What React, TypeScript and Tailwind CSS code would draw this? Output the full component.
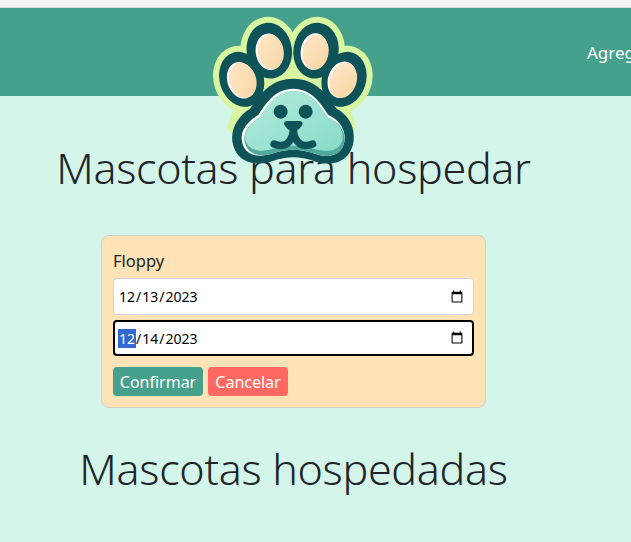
import React from "react";

function PawLogo() {
  const pad =
    "M310 236 C378 236 412 285 440 326 C478 346 497 385 490 428 C478 494 412 500 370 482 C330 468 290 468 250 482 C200 500 138 492 127 424 C122 378 150 345 180 326 C210 282 243 236 310 236 Z";
  const toes = [
    { cx: 238, cy: 152, rx: 68, ry: 84, r: -8 },
    { cx: 378, cy: 152, rx: 68, ry: 84, r: 8 },
    { cx: 155, cy: 238, rx: 66, ry: 84, r: -18 },
    { cx: 462, cy: 238, rx: 66, ry: 84, r: 18 },
  ];
  const inner = [
    { cx: 241, cy: 155, rx: 41, ry: 55, r: -8 },
    { cx: 376, cy: 155, rx: 41, ry: 55, r: 8 },
    { cx: 157, cy: 240, rx: 42, ry: 56, r: -18 },
    { cx: 459, cy: 240, rx: 42, ry: 56, r: 18 },
  ];
  return (
    <svg
      className="absolute left-[210px] top-[15px] h-[155px] w-[168px]"
      viewBox="60 45 504 465"
      aria-label="logo"
    >
      <defs>
        <linearGradient id="padFill" x1="0" y1="0" x2="1" y2="1">
          <stop offset="0" stopColor="#b4ebdd" />
          <stop offset="1" stopColor="#88dbc9" />
        </linearGradient>
        <linearGradient id="beanFill" x1="0" y1="0" x2="1" y2="1">
          <stop offset="0" stopColor="#fde8c8" />
          <stop offset="1" stopColor="#f9d6a4" />
        </linearGradient>
      </defs>
      {/* lime halo */}
      <g fill="#d8f5a2" stroke="#d8f5a2" strokeWidth="36">
        {toes.map((t, i) => (
          <ellipse key={i} cx={t.cx} cy={t.cy} rx={t.rx} ry={t.ry} transform={`rotate(${t.r} ${t.cx} ${t.cy})`} />
        ))}
        <path d="M200 200 L420 200 L480 380 L440 420 L170 420 L130 380 Z" />
      </g>
      {/* dark outline */}
      <g fill="#0e5358">
        {toes.map((t, i) => (
          <ellipse key={i} cx={t.cx} cy={t.cy} rx={t.rx} ry={t.ry} transform={`rotate(${t.r} ${t.cx} ${t.cy})`} />
        ))}
      </g>
      <path d={pad} fill="#0e5358" />
      {/* toe beans */}
      {inner.map((t, i) => (
        <g key={i} transform={`rotate(${t.r} ${t.cx} ${t.cy})`}>
          <ellipse cx={t.cx - 3} cy={t.cy} rx={t.rx} ry={t.ry} fill="#ffffff" />
          <ellipse cx={t.cx + 1} cy={t.cy + 1} rx={t.rx - 2} ry={t.ry - 2} fill="url(#beanFill)" />
        </g>
      ))}
      {/* main pad */}
      <path
        d="M310 266 C365 266 392 310 415 345 C447 358 467 388 464 420 C458 470 412 476 370 460 C330 446 290 446 250 460 C205 476 160 468 155 418 C153 388 175 362 205 345 C228 310 255 266 310 266 Z"
        fill="#ffffff"
      />
      <path
        d="M310 274 C362 274 388 315 412 352 C444 364 465 390 464 420 C458 470 412 476 370 460 C330 446 290 446 250 460 C215 472 170 468 163 420 C161 392 182 370 210 352 C234 315 260 274 310 274 Z"
        fill="#4fa89b"
      />
      <path
        d="M310 274 C362 274 388 315 412 352 C444 364 460 390 458 416 C450 456 410 458 370 446 C330 434 290 434 250 446 C215 458 172 454 165 416 C163 392 182 370 210 352 C234 315 260 274 310 274 Z"
        fill="url(#padFill)"
      />
      {/* face */}
      <circle cx="272" cy="335" r="21" fill="#0e5358" />
      <circle cx="347" cy="335" r="21" fill="#0e5358" />
      <path d="M282 372 Q282 363 292 363 L328 363 Q338 363 338 372 Q332 388 310 396 Q288 388 282 372 Z" fill="#0e5358" />
      <path
        d="M252 432 C282 444 304 432 310 392 C316 432 338 444 368 432"
        fill="none"
        stroke="#0e5358"
        strokeWidth="22"
        strokeLinecap="round"
        strokeLinejoin="round"
      />
    </svg>
  );
}

export default function App() {
  return (
    <div className="relative h-[542px] w-[631px] overflow-hidden bg-[#d4f5e9] font-['Noto_Sans',sans-serif] text-[#212529]">
      <div className="h-[8px] border-b border-[#d9d9d6] bg-[#f6f4f1]" />
      <nav className="flex h-[88px] items-center bg-[#45a08c] pt-[2px] pl-[587px] text-[17px] whitespace-nowrap text-white">
        Agregar
      </nav>

      <main className="w-[587px] text-center">
        <h1 className="mt-[39px] text-[43px] leading-[66px] font-light tracking-[-0.3px]">Mascotas para hospedar</h1>

        <form className="mx-auto mt-[34px] flex h-[173px] w-[385px] flex-col rounded-lg border border-[#cfcfc4] bg-[#ffe2b5] px-[11px] pt-[11px] text-left">
          <p className="text-[16.5px] leading-[28px]">Floppy</p>
          <input
            type="date"
            defaultValue="2023-12-13"
            className="mt-[3px] h-[37px] w-[361px] rounded-[4px] border border-[#ced4da] bg-white pr-[7px] pl-[4px] text-[14px] text-black"
          />
          <input
            type="date"
            defaultValue="2023-12-14"
            autoFocus
            className="mt-[5px] h-[36px] w-[361px] rounded-[4px] border border-[#ced4da] bg-white pr-[7px] pl-[4px] text-[14px] text-black focus:outline-2 focus:-outline-offset-2 focus:outline-black"
          />
          <div className="mt-[11px] flex gap-[5px]">
            <button type="button" className="h-[29px] w-[90px] rounded-[4px] bg-[#45a08c] text-[16px] text-white">
              Confirmar
            </button>
            <button type="button" className="h-[29px] w-[80px] rounded-[4px] bg-[#ff6961] text-[16px] text-white">
              Cancelar
            </button>
          </div>
        </form>

        <h1 className="mt-[28px] text-[43px] leading-[66px] font-light tracking-[-0.3px]">Mascotas hospedadas</h1>
      </main>

      <PawLogo />
    </div>
  );
}
